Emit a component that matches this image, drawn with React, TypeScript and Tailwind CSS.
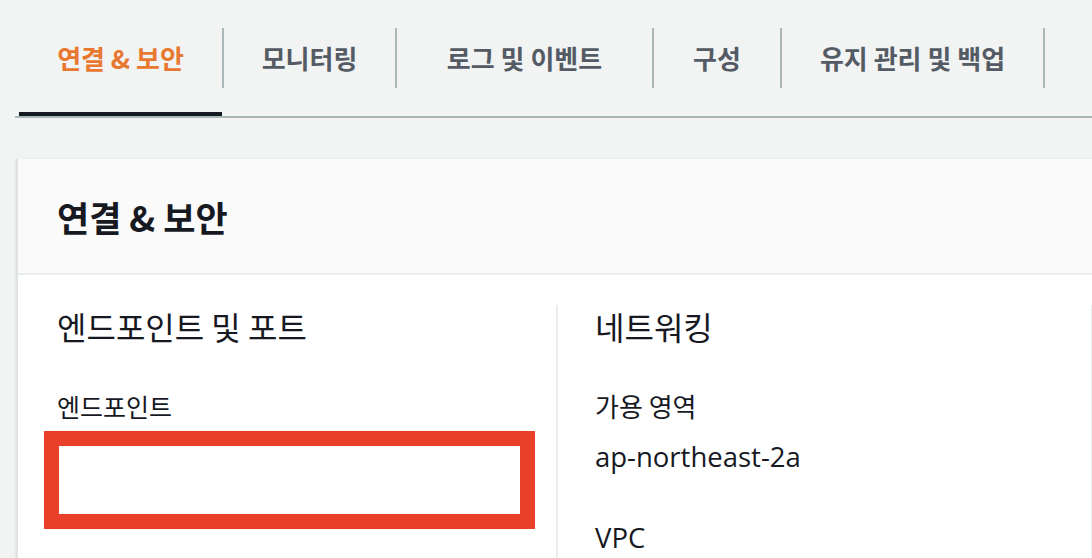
import React from 'react';

const tabs = [
  { label: '연결 & 보안', width: 'w-[205px]', active: true },
  { label: '모니터링', width: 'w-[173px]', active: false },
  { label: '로그 및 이벤트', width: 'w-[257px]', active: false },
  { label: '구성', width: 'w-[128px]', active: false },
  { label: '유지 관리 및 백업', width: 'w-[263px]', active: false },
];

const ko = { fontFamily: '"Noto Sans CJK KR", "Noto Sans", sans-serif' };
const latin = { fontFamily: '"Open Sans", "Noto Sans CJK KR", sans-serif' };

const App: React.FC = () => {
  return (
    <div className="w-[1092px] h-[558px] overflow-hidden bg-[#f2f3f3] text-[#16191f]" style={ko}>
      {/* tab bar */}
      <div className="ml-[15px] border-b-2 border-[#aab7b8]">
        <div className="flex pl-[4px]">
          {tabs.map((t) => (
            <div key={t.label} className={`${t.width} shrink-0 flex flex-col`}>
              <div className="mt-[28px] h-[60px] flex items-center justify-center border-r-2 border-[#aab7b8]">
                <span
                  className={`text-[26px] font-bold leading-none ${
                    t.active ? 'text-[#e8782f]' : 'text-[#545b64]'
                  }`}
                >
                  {t.label}
                </span>
              </div>
              <div className={`mt-[24px] h-[4px] mr-[2px] ${t.active ? 'bg-[#16191f]' : ''}`} />
            </div>
          ))}
        </div>
      </div>

      {/* connectivity card */}
      <div className="mt-[41px] ml-[16px] w-[1640px] border-l-2 border-[#dfe3e3] bg-white shadow-sm">
        <div className="h-[116px] flex items-center pl-[39px] bg-[#fafafa] border-b-2 border-[#eaeded]">
          <h2 className="text-[35px] font-bold leading-none">연결 &amp; 보안</h2>
        </div>

        <div className="grid grid-cols-[538px_535px_1fr] pt-[30px] h-[300px]">
          <div className="pl-[39px] pr-[20px]">
            <h3 className="text-[32px] font-normal leading-[42px]">엔드포인트 및 포트</h3>
            <div className="mt-[43px] text-[25px] leading-[32px]">엔드포인트</div>
            <div className="mt-[9px] -ml-[13px] w-[491px] h-[98px] border-[15px] border-[#e9402a] bg-white" />
          </div>

          <div className="pl-[37px] pr-[20px] border-l-2 border-[#eaeded]">
            <h3 className="text-[32px] font-normal leading-[42px]">네트워킹</h3>
            <div className="mt-[43px] text-[26px] leading-[32px]">가용 영역</div>
            <div className="mt-[19px] text-[27.5px] leading-[32px]" style={latin}>
              ap-northeast-2a
            </div>
            <div className="mt-[49px] text-[27.5px] leading-[32px]" style={latin}>
              VPC
            </div>
          </div>

          <div className="pl-[39px] border-l-2 border-[#eaeded]" />
        </div>
      </div>
    </div>
  );
};

export default App;
